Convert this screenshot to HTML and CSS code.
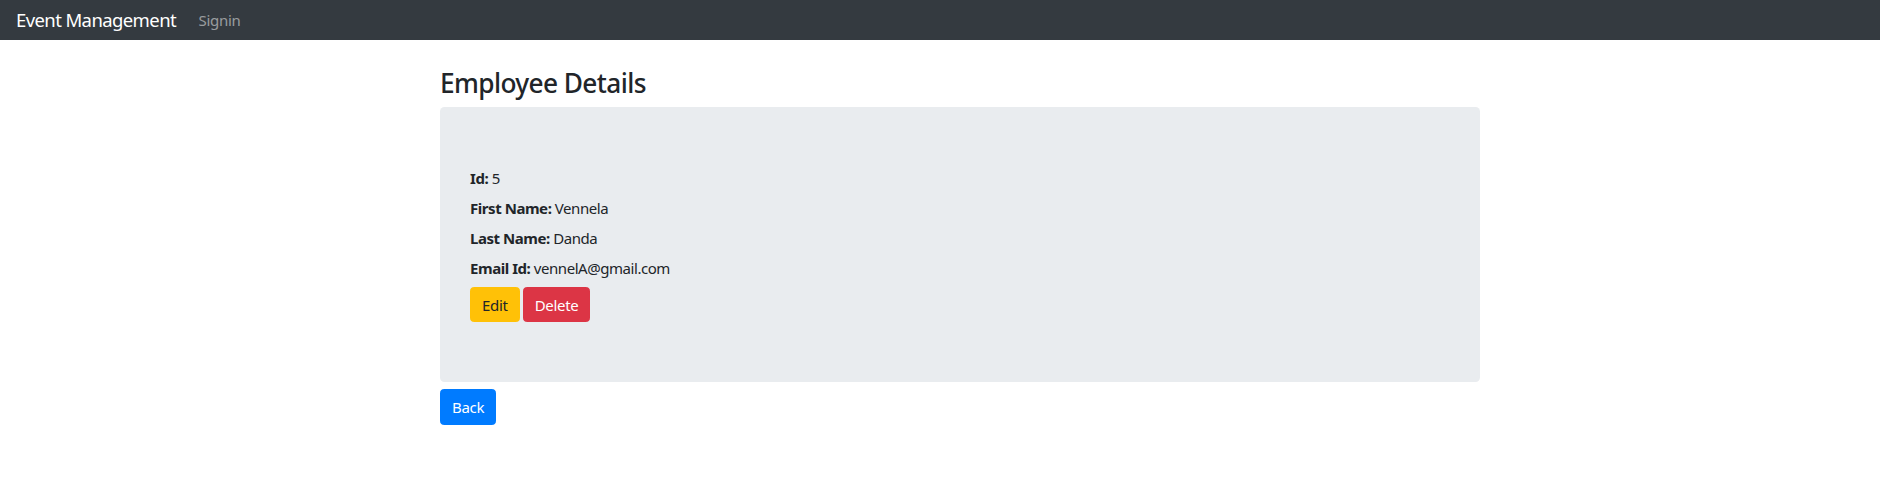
FILE: index.html
```html
<!DOCTYPE html>
<html lang="en">
<head>
<meta charset="utf-8">
<title>Event Management</title>
<link rel="stylesheet" href="styles.css">
</head>
<body>
<nav class="navbar">
  <a class="brand" href="#">Event Management</a>
  <a class="nav-link" href="#">Signin</a>
</nav>
<main class="page">
  <h3 class="title">Employee Details</h3>
  <div class="jumbotron">
    <p class="row"><b>Id:</b> 5</p>
    <p class="row"><b>First Name:</b> Vennela</p>
    <p class="row"><b>Last Name:</b> Danda</p>
    <p class="row"><b>Email Id:</b> vennelA@gmail.com</p>
    <div class="actions">
      <button class="btn btn-warning">Edit</button>
      <button class="btn btn-danger">Delete</button>
    </div>
  </div>
  <button class="btn btn-primary btn-back">Back</button>
</main>
</body>
</html>
```
FILE: styles.css
```css
* { box-sizing: border-box; }
html { font-size: 15px; }
body {
  margin: 0;
  font-family: "Noto Sans", "Open Sans", "Liberation Sans", sans-serif;
  font-size: 15px;
  line-height: 1.5;
  color: #212529;
  background: #fff;
}
.navbar {
  height: 40px;
  background: #343a40;
  display: flex;
  align-items: center;
  padding: 0 16px;
}
.brand {
  font-size: 18.5px;
  line-height: 30px;
  color: #fff;
  text-decoration: none;
  margin-right: 15px;
  letter-spacing: -0.6px;
}
.nav-link {
  color: rgba(255,255,255,.5);
  text-decoration: none;
  padding: 0 7.5px;
  font-size: 15px;
  letter-spacing: -0.3px;
}
.page {
  width: 1040px;
  margin-left: 440px;
  padding-top: 28px;
}
.title {
  font-size: 26.25px;
  font-weight: 500;
  line-height: 1.2;
  margin: 0 0 7.5px;
  letter-spacing: -0.6px;
}
.jumbotron {
  background: #e9ecef;
  border-radius: 4.5px;
  padding: 60px 30px;
  margin-bottom: 7px;
}
.row {
  margin: 0 0 8px;
  line-height: 22px;
  height: 22px;
  letter-spacing: -0.45px;
}
.row b { font-weight: 700; }
.actions {
  display: flex;
  gap: 3px;
  height: 35px;
}
.btn {
  font-family: inherit;
  font-size: 15px;
  line-height: 22px;
  height: 35px;
  padding: 0 11px;
  border: 1px solid transparent;
  border-radius: 3.75px;
  letter-spacing: -0.3px;
  cursor: pointer;
}
.btn-back { height: 36px; }
.btn-warning { background: #ffc107; border-color: #ffc107; color: #212529; }
.btn-danger { background: #dc3545; border-color: #dc3545; color: #fff; }
.btn-primary { background: #007bff; border-color: #007bff; color: #fff; }
```
